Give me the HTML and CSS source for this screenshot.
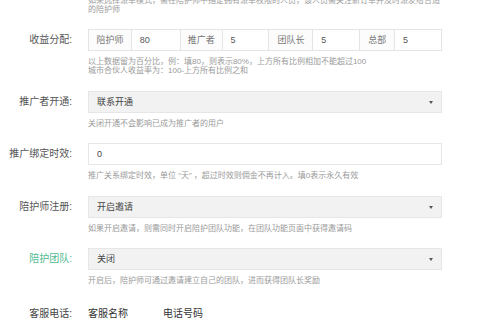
FILE: index.html
```html
<!DOCTYPE html>
<html lang="zh-CN">
<head>
<meta charset="utf-8">
<link rel="stylesheet" href="styles.css">
</head>
<body>
<div class="form">
  <div class="group first">
    <div class="label"></div>
    <div class="field">
      <div class="help">如果选择派单模式，需在陪护师中指定拥有派单权限的人员，该人员需关注新订单并及时派发给合适<br>的陪护师</div>
    </div>
  </div>

  <div class="group">
    <div class="label">收益分配:</div>
    <div class="field">
      <div class="ratio">
        <div class="cell key w43">陪护师</div>
        <div class="cell val w49">80</div>
        <div class="cell key w42">推广者</div>
        <div class="cell val w47">5</div>
        <div class="cell key w44">团队长</div>
        <div class="cell val w47">5</div>
        <div class="cell key w35">总部</div>
        <div class="cell val w47 last">5</div>
      </div>
      <div class="help">以上数据留为百分比，例：填80，则表示80%，上方所有比例相加不能超过100<br>城市合伙人收益率为：100-上方所有比例之和</div>
    </div>
  </div>

  <div class="group">
    <div class="label">推广者开通:</div>
    <div class="field">
      <div class="select">联系开通<span class="caret"></span></div>
      <div class="help">关闭开通不会影响已成为推广者的用户</div>
    </div>
  </div>

  <div class="group">
    <div class="label">推广绑定时效:</div>
    <div class="field">
      <div class="input">0</div>
      <div class="help">推广关系绑定时效，单位 “天” ，超过时效则佣金不再计入。填0表示永久有效</div>
    </div>
  </div>

  <div class="group">
    <div class="label">陪护师注册:</div>
    <div class="field">
      <div class="select">开启邀请<span class="caret"></span></div>
      <div class="help">如果开启邀请，则需同时开启陪护团队功能，在团队功能页面中获得邀请码</div>
    </div>
  </div>

  <div class="group">
    <div class="label green">陪护团队:</div>
    <div class="field">
      <div class="select">关闭<span class="caret"></span></div>
      <div class="help">开启后，陪护师可通过邀请建立自己的团队，进而获得团队长奖励</div>
    </div>
  </div>

  <div class="group service">
    <div class="label dark">客服电话:</div>
    <div class="field heads">
      <span class="head name">客服名称</span>
      <span class="head">电话号码</span>
    </div>
  </div>
</div>
</body>
</html>
```

FILE: styles.css
```css
* { box-sizing: border-box; }
html, body {
  margin: 0;
  padding: 0;
  background: #ffffff;
  width: 480px;
  height: 320px;
  overflow: hidden;
}
body {
  font-family: "Liberation Sans", "Noto Sans CJK SC", sans-serif;
  color: #444;
}
.form {
  display: flex;
  flex-direction: column;
  margin-top: -4.5px;
}
.group {
  display: grid;
  grid-template-columns: 72px 354px;
  column-gap: 16px;
  margin-top: 15.5px;
}
.group.first { margin-top: 0; }
.label {
  font-size: 10px;
  line-height: 22px;
  height: 22px;
  text-align: right;
  color: #555;
  white-space: nowrap;
}
.label.green { color: #52b98f; }
.field { display: flex; flex-direction: column; }
.help {
  font-size: 8px;
  line-height: 9px;
  color: #9a9a9a;
  margin-top: 6px;
  white-space: nowrap;
}
.first .help { margin-top: 0; }
.first .label { height: 0; }
.ratio {
  display: flex;
  height: 22px;
  border: 1px solid #e4e4e4;
}
.cell {
  height: 20px;
  line-height: 20px;
  font-size: 9px;
  border-right: 1px solid #e4e4e4;
}
.cell.last { border-right: none; }
.cell.key { text-align: center; color: #777; background: #fcfcfc; }
.cell.val { padding-left: 8px; color: #555; }
.w43 { width: 43px; }
.w49 { width: 49px; }
.w42 { width: 42px; }
.w47 { width: 47px; }
.w44 { width: 44px; }
.w35 { width: 35px; }
.w47.last { width: 46px; }
.select, .input {
  position: relative;
  height: 22px;
  line-height: 20px;
  font-size: 9px;
  padding-left: 8px;
  color: #444;
  border: 1px solid #e6e6e6;
}
.select { background: #f2f2f2; }
.input { background: #fff; }
.caret {
  position: absolute;
  right: 8px;
  top: 9px;
  width: 0;
  height: 0;
  border-left: 2.5px solid transparent;
  border-right: 2.5px solid transparent;
  border-top: 3px solid #555;
}
.service { margin-top: 18px; }
.label.dark { color: #444; }
.heads {
  flex-direction: row;
  font-size: 10px;
  line-height: 22px;
  color: #333;
}
.head.name { width: 75px; }
```
